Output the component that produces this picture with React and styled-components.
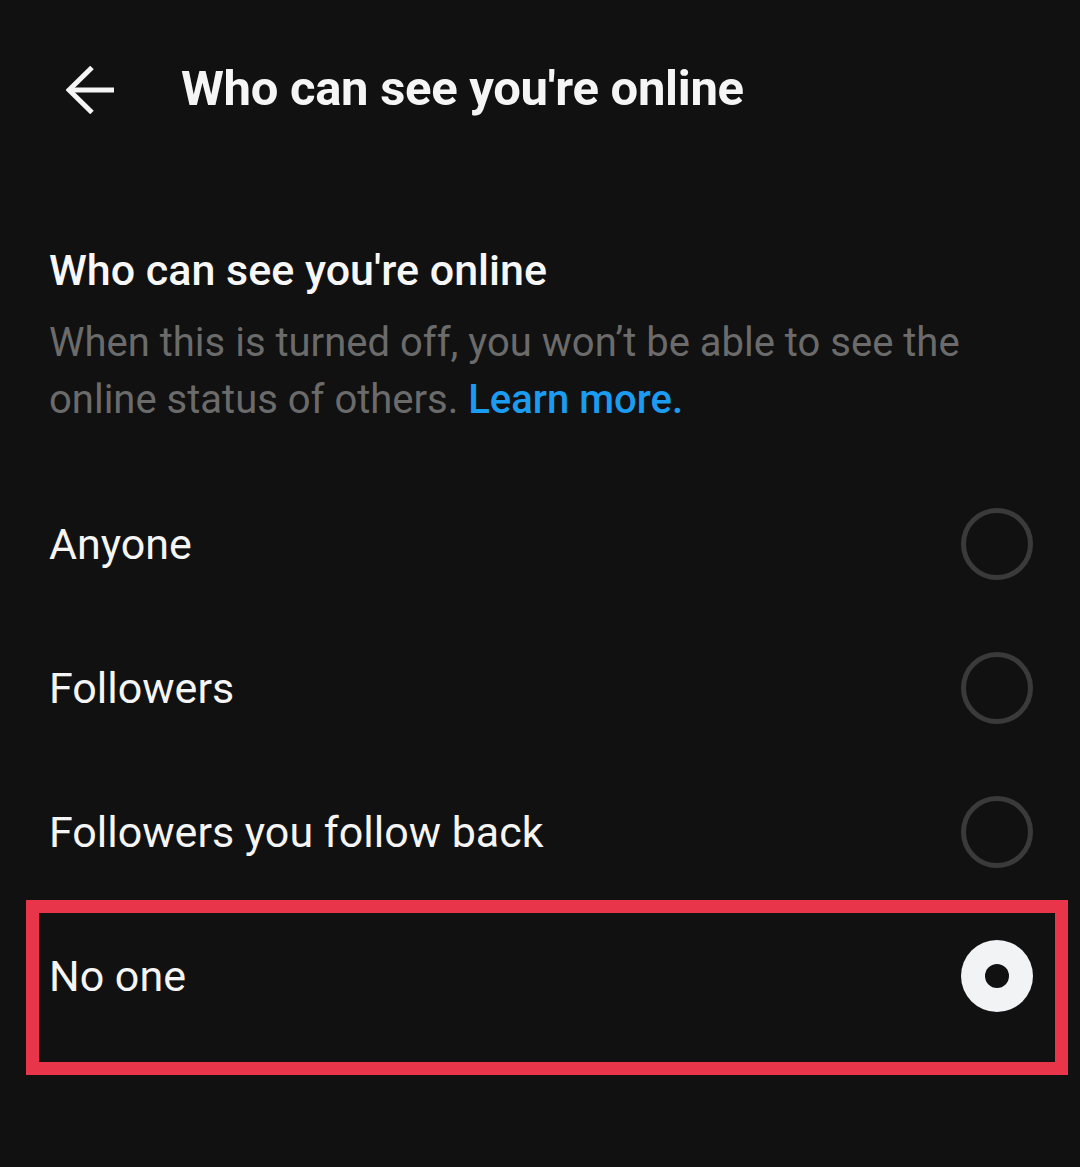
import React, { useState } from "react";
import styled, { createGlobalStyle } from "styled-components";

const Global = createGlobalStyle`
  html, body { margin: 0; padding: 0; background: #111111; }
  body { font-family: Roboto, "Noto Sans", "Liberation Sans", sans-serif; color: #f5f5f5; }
`;

const Page = styled.div`
  width: 1080px;
  min-height: 1167px;
  background: #111111;
  display: flex;
  flex-direction: column;
`;

const Header = styled.header`
  height: 176px;
  display: flex;
  align-items: center;
  padding-left: 66px;
  gap: 67px;
`;

const BackButton = styled.button`
  width: 48px;
  height: 48px;
  padding: 0;
  border: 0;
  background: transparent;
  display: flex;
  align-items: center;
  justify-content: center;
  margin-top: 4px;
  cursor: pointer;
`;

const Title = styled.h1`
  margin: 0;
  font-size: 49px;
  font-weight: 700;
  color: #f5f5f5;
  letter-spacing: -0.3px;
`;

const Section = styled.section`
  padding: 0 49px;
  display: flex;
  flex-direction: column;
`;

const Heading = styled.h2`
  margin: 66px 0 0;
  font-size: 43px;
  line-height: 56px;
  font-weight: 500;
  color: #f7f7f7;
`;

const Description = styled.p`
  margin: 16px 0 0;
  font-size: 40px;
  line-height: 57px;
  color: #6b6b6b;
`;

const Link = styled.a`
  color: #1b9cf0;
  font-weight: 500;
  text-decoration: none;
`;

const Options = styled.div`
  margin-top: 44px;
  display: flex;
  flex-direction: column;
`;

const Row = styled.label`
  position: relative;
  height: 144px;
  display: flex;
  align-items: center;
  justify-content: space-between;
  padding: 0 47px 0 49px;
  cursor: pointer;
`;

const OptionText = styled.span`
  font-size: 43px;
  color: #f5f5f5;
`;

const Radio = styled.span`
  width: 72px;
  height: 72px;
  box-sizing: border-box;
  border-radius: 50%;
  display: flex;
  align-items: center;
  justify-content: center;
  border: ${(p) => (p.$checked ? "0" : "5px solid #3a3a3a")};
  background: ${(p) => (p.$checked ? "#f2f3f5" : "transparent")};
  &::after {
    content: "";
    display: ${(p) => (p.$checked ? "block" : "none")};
    width: 24px;
    height: 24px;
    border-radius: 50%;
    background: #111111;
  }
`;

const Highlight = styled.span`
  position: absolute;
  top: -4px;
  left: 26px;
  right: 12px;
  bottom: -27px;
  border: 13px solid #e8354a;
  pointer-events: none;
`;

const options = ["Anyone", "Followers", "Followers you follow back", "No one"];

export default function App() {
  const [selected, setSelected] = useState("No one");
  return (
    <Page>
      <Global />
      <Header>
        <BackButton aria-label="Back">
          <svg width="48" height="48" viewBox="0 0 48 48" fill="none">
            <path d="M48 24H3" stroke="#f5f5f5" strokeWidth="5" />
            <path d="M26 1.5L3 24l23 22.5" stroke="#f5f5f5" strokeWidth="5" strokeLinejoin="miter" />
          </svg>
        </BackButton>
        <Title>Who can see you're online</Title>
      </Header>
      <Section>
        <Heading>Who can see you're online</Heading>
        <Description>
          When this is turned off, you won’t be able to see the
          <br />
          online status of others. <Link href="#">Learn more.</Link>
        </Description>
      </Section>
      <Options>
        {options.map((o) => (
          <Row key={o} onClick={() => setSelected(o)}>
            <OptionText>{o}</OptionText>
            <Radio $checked={selected === o} />
            {o === "No one" && <Highlight />}
          </Row>
        ))}
      </Options>
    </Page>
  );
}
